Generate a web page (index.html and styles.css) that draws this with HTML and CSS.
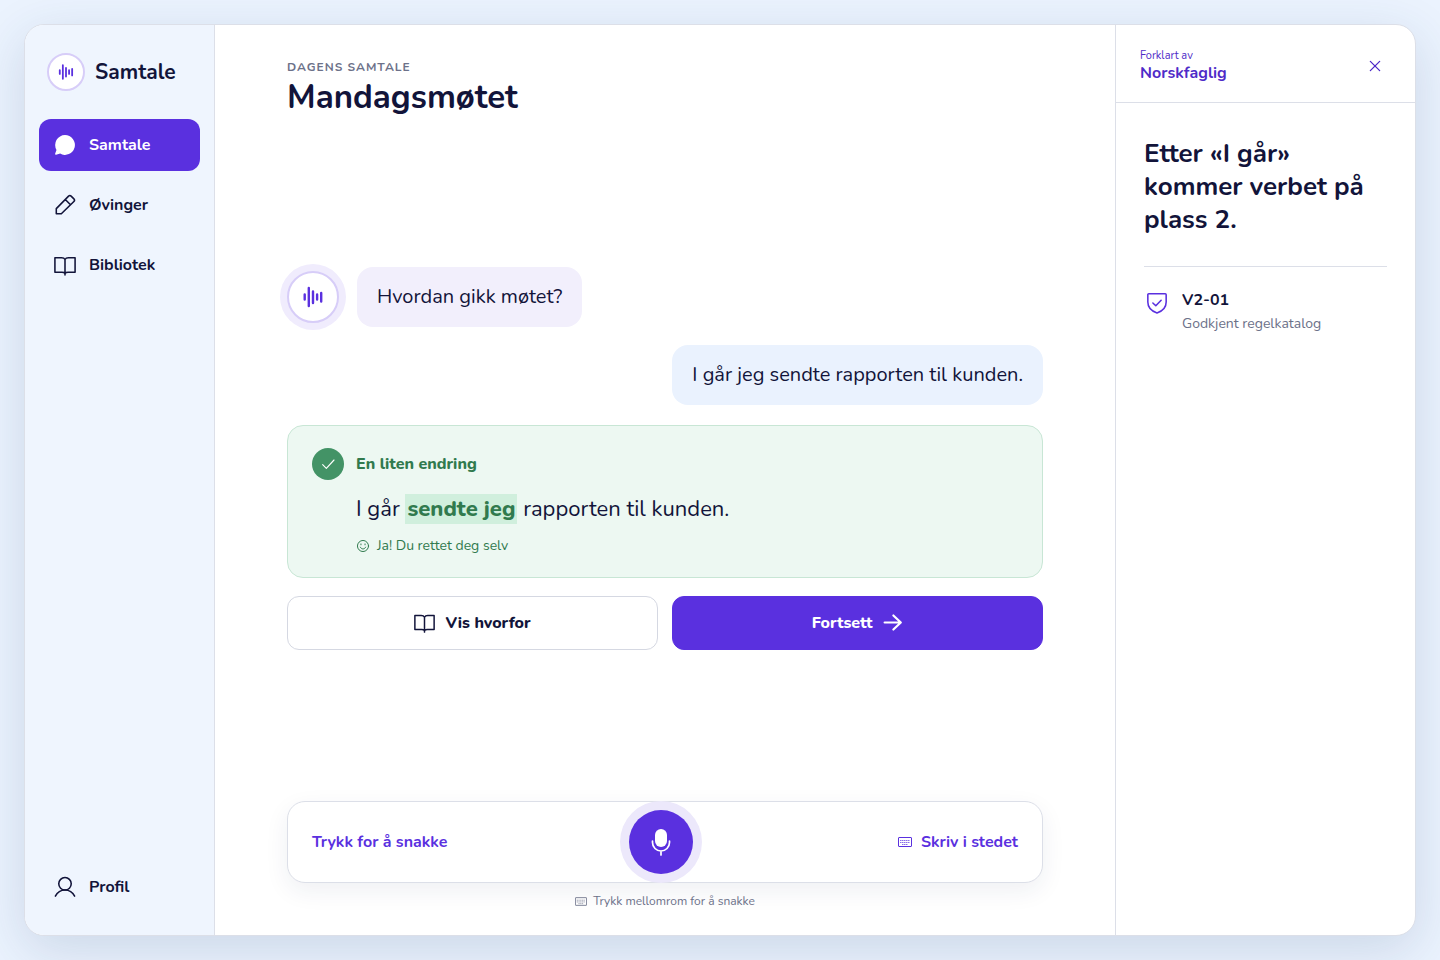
FILE: index.html
```
<!DOCTYPE html>
<html lang="nb">
<head>
<meta charset="utf-8">
<meta name="viewport" content="width=device-width, initial-scale=1">
<title>Samtale</title>
<link rel="stylesheet" href="styles.css">
</head>
<body>

<!-- shared icons -->
<svg class="sprite" aria-hidden="true">
  <symbol id="icon-wave" viewBox="0 0 24 24">
    <path d="M3.700 9.500v5M7.800 3v18M12 6.500v11.500M16.100 9.500v5M20.200 8v8.500"/>
  </symbol>
  <symbol id="icon-book" viewBox="0 0 24 24">
    <path d="M12 6C11.300 4.600 10 4 8.300 4H1v16h7.700c1.600 0 2.700.4 3.300 1.200.6-.8 1.700-1.200 3.300-1.200H23V4h-7.300C14 4 12.700 4.600 12 6zM12 6v17"/>
  </symbol>
  <symbol id="icon-keyboard" viewBox="0 0 14 10">
    <rect x="0.500" y="0.500" width="13" height="9" rx="0.500"/>
    <path d="M2 3.500h10M2 5.500h10M4 7.500h6" stroke-dasharray="1.500 0.500" opacity="0.700"/>
  </symbol>
</svg>

<div class="shell">
  <aside class="sidebar">
    <div class="brand">
      <span class="avatar avatar-small"><svg><use href="#icon-wave"/></svg></span>
      <span>Samtale</span>
    </div>
    <nav class="nav">
      <a class="nav-link active" href="#samtale" aria-current="page">
        <svg viewBox="0 0 24 24"><path class="solid" d="M12 1.200a10.800 10.800 0 1 1-5.300 20.200L2.300 22.700c-.8.2-1.300-.5-1.100-1.200l1.500-4.100A10.800 10.800 0 0 1 12 1.200z"/></svg>
        Samtale
      </a>
      <a class="nav-link" href="#ovinger">
        <svg viewBox="0 0 24 24"><path d="M2.500 21.500V16L15.900 2.300a2 2 0 0 1 2.800 0l3 3a2 2 0 0 1 0 2.800L8 21.500zM12.300 6l5.700 5.700"/></svg>
        Øvinger
      </a>
      <a class="nav-link" href="#bibliotek">
        <svg><use href="#icon-book"/></svg>
        Bibliotek
      </a>
      <a class="nav-link nav-profile" href="#profil">
        <svg viewBox="0 0 24 24"><circle cx="12" cy="8.500" r="6.800"/><path d="M1.500 22C3.800 17.500 7.500 15.300 12 15.300s8.200 2.200 10.500 6.700"/></svg>
        Profil
      </a>
    </nav>
  </aside>

  <main class="main">
    <header class="page-header">
      <p class="eyebrow">Dagens samtale</p>
      <h1>Mandagsmøtet</h1>
    </header>

    <section class="conversation">
      <div class="tutor-row">
        <span class="avatar avatar-halo"><svg><use href="#icon-wave"/></svg></span>
        <p class="bubble bubble-tutor">Hvordan gikk møtet?</p>
      </div>
      <p class="bubble bubble-user">I går jeg sendte rapporten til kunden.</p>

      <div class="correction">
        <span class="check"><svg viewBox="0 0 24 24"><path d="M4 13l5.500 5.500L21 6"/></svg></span>
        <h2>En liten endring</h2>
        <p class="sentence">I går <mark>sendte jeg</mark> rapporten til kunden.</p>
        <p class="praise">
          <svg viewBox="0 0 24 24"><circle cx="12" cy="12" r="9.500"/><path d="M7.500 14c1 2 2.500 3 4.500 3s3.500-1 4.500-3M8.500 8.500v1.500M15.500 8.500v1.500"/></svg>
          Ja! Du rettet deg selv
        </p>
      </div>

      <div class="actions">
        <button class="button" type="button"><svg><use href="#icon-book"/></svg>Vis hvorfor</button>
        <button class="button button-primary" type="button">Fortsett<svg viewBox="0 0 24 24"><path d="M3 12h18M13 4l8.500 8-8.500 8"/></svg></button>
      </div>
    </section>

    <footer>
      <div class="composer">
        <label class="composer-label" for="mic">Trykk for å snakke</label>
        <button class="mic" id="mic" type="button">
          <svg viewBox="0 0 28 28"><rect class="solid" x="8" y="1" width="12" height="18" rx="6"/><path d="M5.500 13v1.500a8.500 8.500 0 0 0 17 0V13M14 23v4"/></svg>
        </button>
        <button class="write" type="button"><svg><use href="#icon-keyboard"/></svg>Skriv i stedet</button>
      </div>
      <p class="hint"><svg><use href="#icon-keyboard"/></svg>Trykk mellomrom for å snakke</p>
    </footer>
  </main>

  <aside class="panel">
    <header class="panel-header">
      <div>
        <p class="panel-by">Forklart av</p>
        <p class="panel-name">Norskfaglig</p>
      </div>
      <button class="close" type="button" aria-label="Lukk"><svg viewBox="0 0 24 24"><path d="M4 4l16 16M20 4L4 20"/></svg></button>
    </header>
    <div class="panel-body">
      <h2>Etter «I går» kommer verbet på plass 2.</h2>
      <div class="rule">
        <svg viewBox="0 0 24 24"><path d="M3 2h18c.6 0 1 .4 1 1v8c0 5.500-4 10-10 11.800C6 21 2 16.500 2 11V3c0-.6.4-1 1-1zM7.500 12l3.200 3 5.800-6"/></svg>
        <div>
          <p class="rule-id">V2-01</p>
          <p class="rule-source">Godkjent regelkatalog</p>
        </div>
      </div>
    </div>
  </aside>
</div>

</body>
</html>
```
FILE: styles.css
```
:root {
  --ink: #12143a;
  --purple: #5a30df;
  --purple-soft: #f2effc;
  --green: #317a4e;
  --muted: #6c7189;
  --line: #dcdfe8;
}

* {
  box-sizing: border-box;
}

body {
  margin: 0;
  min-height: 100vh;
  padding: 24px;
  display: flex;
  background: #ebf3fe;
  color: var(--ink);
  font-family: Nunito, Lato, "Open Sans", sans-serif;
  font-size: 16px;
}

h1, h2, p {
  margin: 0;
}

button {
  padding: 0;
  border: 0;
  background: none;
  color: inherit;
  font: inherit;
  cursor: pointer;
}

svg {
  flex: none;
  fill: none;
  stroke: currentColor;
  stroke-width: 1.7;
  stroke-linecap: round;
  stroke-linejoin: round;
}

.solid {
  fill: currentColor;
  stroke: none;
}

.sprite {
  position: absolute;
  width: 0;
  height: 0;
}

.shell {
  flex: 1;
  display: grid;
  grid-template-columns: 190px 1fr 300px;
  overflow: hidden;
  background: #fff;
  border: 1px solid var(--line);
  border-radius: 20px;
  box-shadow: 0 14px 52px rgba(40, 70, 115, 0.16);
}

/* Sidebar */
.sidebar {
  display: flex;
  flex-direction: column;
  padding: 28px 14px 22px;
  background: #eff5fe;
  border-right: 1px solid var(--line);
}

.brand {
  display: flex;
  align-items: center;
  gap: 10px;
  margin-bottom: 28px;
  padding-left: 8px;
  font-size: 21px;
  font-weight: 700;
}

.avatar {
  display: grid;
  place-items: center;
  flex: none;
  width: 52px;
  height: 52px;
  background: #fff;
  border: 2px solid #d7cdf8;
  border-radius: 50%;
  color: var(--purple);
}

.avatar svg {
  width: 24px;
  height: 24px;
  stroke-width: 2.4;
}

.avatar-small {
  width: 38px;
  height: 38px;
}

.avatar-small svg {
  width: 18px;
  height: 18px;
}

.avatar-halo {
  box-shadow: 0 0 0 7px #f0ecfd;
}

.nav {
  flex: 1;
  display: flex;
  flex-direction: column;
  gap: 8px;
}

.nav-link {
  display: flex;
  align-items: center;
  gap: 13px;
  height: 52px;
  padding: 0 15px;
  border-radius: 12px;
  color: var(--ink);
  font-weight: 700;
  text-decoration: none;
}

.nav-link svg {
  width: 22px;
  height: 22px;
}

.nav-link.active {
  background: var(--purple);
  color: #fff;
}

.nav-profile {
  margin-top: auto;
}

/* Conversation */
.main {
  display: flex;
  flex-direction: column;
  padding: 32px 72px 24px;
}

.eyebrow {
  color: var(--muted);
  font-size: 12px;
  line-height: 20px;
  font-weight: 700;
  letter-spacing: 1px;
  text-transform: uppercase;
}

h1 {
  font-size: 33px;
  line-height: 42px;
  font-weight: 700;
}

.conversation {
  flex: 1;
  display: flex;
  flex-direction: column;
  justify-content: center;
  gap: 18px;
  padding-bottom: 4px;
}

.tutor-row {
  display: flex;
  align-items: center;
  gap: 18px;
}

.bubble {
  padding: 15px 20px;
  border-radius: 16px;
  font-size: 20px;
  line-height: 30px;
}

.bubble-tutor {
  background: var(--purple-soft);
}

.bubble-user {
  align-self: flex-end;
  background: #eaf2fe;
}

.correction {
  display: grid;
  grid-template-columns: 32px 1fr;
  column-gap: 12px;
  align-items: center;
  margin-top: 2px;
  padding: 22px 24px 20px;
  background: #edf8f2;
  border: 1px solid #c8e6d5;
  border-radius: 16px;
  color: var(--green);
}

.check {
  display: grid;
  place-items: center;
  width: 32px;
  height: 32px;
  background: #439366;
  border-radius: 50%;
  color: #fff;
}

.check svg {
  width: 16px;
  height: 16px;
}

.correction h2 {
  font-size: 16px;
  font-weight: 800;
}

.sentence,
.praise {
  grid-column: 2;
}

.sentence {
  margin-top: 11px;
  color: var(--ink);
  font-size: 22px;
  line-height: 36px;
}

.sentence mark {
  padding: 0 2px;
  background: #d0efdd;
  color: var(--green);
  font-weight: 800;
}

.praise {
  display: flex;
  align-items: center;
  gap: 7px;
  margin-top: 8px;
  font-size: 14px;
  line-height: 22px;
}

.praise svg {
  width: 14px;
  height: 14px;
}

.actions {
  display: grid;
  grid-template-columns: 1fr 1fr;
  gap: 14px;
}

.button {
  display: flex;
  align-items: center;
  justify-content: center;
  gap: 10px;
  height: 54px;
  border: 1px solid #d5d8e2;
  border-radius: 12px;
  font-weight: 800;
}

.button svg {
  width: 21px;
  height: 21px;
}

.button-primary {
  background: var(--purple);
  border-color: var(--purple);
  color: #fff;
}

.button-primary svg {
  stroke-width: 2.5;
}

/* Composer */
.composer {
  display: grid;
  grid-template-columns: 1fr auto 1fr;
  align-items: center;
  height: 82px;
  padding: 0 24px 0 16px;
  background: #fff;
  border: 1px solid var(--line);
  border-radius: 18px;
  box-shadow: 0 8px 24px rgba(30, 40, 90, 0.07);
  color: var(--purple);
  font-weight: 700;
}

.composer-label {
  padding-left: 8px;
}

.mic {
  display: grid;
  place-items: center;
  width: 64px;
  height: 64px;
  background: var(--purple);
  border-radius: 50%;
  box-shadow: 0 0 0 9px #ece8fb;
  color: #fff;
}

.mic svg {
  width: 28px;
  height: 28px;
}

.write {
  justify-self: end;
  display: flex;
  align-items: center;
  gap: 9px;
}

.write svg,
.hint svg {
  width: 14px;
  height: 10px;
  stroke-width: 1;
  stroke-linecap: butt;
}

.hint {
  display: flex;
  align-items: center;
  justify-content: center;
  gap: 6px;
  margin-top: 8px;
  color: var(--muted);
  font-size: 12px;
  line-height: 20px;
}

.hint svg {
  width: 12px;
  height: 9px;
}

/* Explanation panel */
.panel {
  border-left: 1px solid var(--line);
}

.panel-header {
  display: flex;
  align-items: center;
  justify-content: space-between;
  height: 78px;
  padding: 4px 24px 0;
  border-bottom: 1px solid var(--line);
  color: #4f2bc8;
}

.panel-by {
  font-size: 11px;
  line-height: 14px;
}

.panel-name {
  font-weight: 700;
  line-height: 20px;
}

.close {
  display: grid;
  place-items: center;
  width: 32px;
  height: 32px;
}

.close svg {
  width: 14px;
  height: 14px;
  stroke-width: 2.2;
}

.panel-body {
  padding: 34px 28px;
}

.panel-body h2 {
  padding-bottom: 30px;
  border-bottom: 1px solid var(--line);
  font-size: 26px;
  line-height: 33px;
  font-weight: 700;
}

.rule {
  display: flex;
  gap: 14px;
  padding: 21px 2px;
}

.rule svg {
  width: 22px;
  height: 22px;
  margin-top: 4px;
  color: var(--purple);
}

.rule-id {
  font-weight: 700;
  line-height: 24px;
}

.rule-source {
  color: var(--muted);
  font-size: 14px;
  line-height: 24px;
}
```
